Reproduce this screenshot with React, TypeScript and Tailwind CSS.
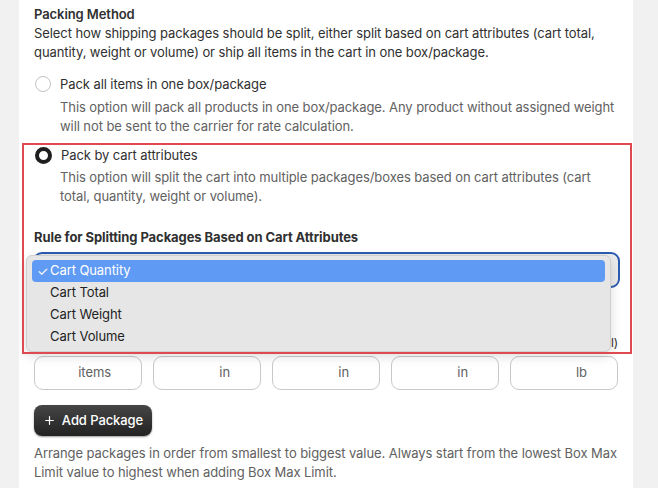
import { Plus } from 'lucide-react';

const units = ['items', 'in', 'in', 'in', 'lb'];
const options = ['Cart Total', 'Cart Weight', 'Cart Volume'];

export default function App() {
  return (
    <div
      className="min-h-[488px] w-[658px] bg-[#f1f1f1] text-[13px] text-[#303030]"
      style={{ fontFamily: 'Inter, "Noto Sans", sans-serif' }}
    >
      <div className="relative ml-[19px] h-[488px] w-[614px] overflow-hidden bg-white pl-[15px] pr-[15px] pt-[4px] tracking-[-0.08px]">
        {/* Packing method */}
        <h2 className="text-[13px] font-semibold leading-[20px] text-[#303030]">Packing Method</h2>
        <p className="whitespace-nowrap leading-[19px] text-[#303030]">
          Select how shipping packages should be split, either split based on cart attributes (cart total,
          <br />
          quantity, weight or volume) or ship all items in the cart in one box/package.
        </p>

        <div className="mt-[12px] flex h-[20px] items-center gap-[9px]">
          <span className="ml-[1px] h-[16px] w-[16px] rounded-full border border-[#c4c4c4] bg-white" />
          <span className="leading-[20px]">Pack all items in one box/package</span>
        </div>
        <p className="ml-[26px] mt-[4px] whitespace-nowrap leading-[19px] text-[#616161]">
          This option will pack all products in one box/package. Any product without assigned weight
          <br />
          will not be sent to the carrier for rate calculation.
        </p>

        <div className="mt-[9px] flex h-[20px] items-center gap-[9px]">
          <span className="ml-[1px] h-[17px] w-[17px] rounded-full border-[4px] border-[#1f1f1f] bg-white" />
          <span className="leading-[20px]">Pack by cart attributes</span>
        </div>
        <p className="ml-[26px] mt-[3px] whitespace-nowrap leading-[19px] text-[#616161]">
          This option will split the cart into multiple packages/boxes based on cart attributes (cart
          <br />
          total, quantity, weight or volume).
        </p>

        <h3 className="mt-[21px] font-bold leading-[20px]">Rule for Splitting Packages Based on Cart Attributes</h3>
        <div className="ml-[-1px] mt-[5px] h-[36px] w-[587px] rounded-[9px] border-2 border-[#2c5cb0] bg-[#ececec]" />

        {/* label mostly hidden under the open menu */}
        <div className="mt-[46px] flex h-[18px] w-[584px] justify-end text-[12px] leading-[18px] text-[#303030]">
          <span>Weight (optional)</span>
        </div>

        <div className="mt-[4px] grid w-[584px] grid-cols-5 gap-[11px]">
          {units.map((u, i) => (
            <div
              key={i}
              className="flex h-[34px] items-center justify-end rounded-[9px] border border-[#c9c9c9] pr-[30px] text-[#616161]"
            >
              {u}
            </div>
          ))}
        </div>

        <button className="mt-[15px] flex h-[31px] w-[118px] items-center justify-center gap-[6px] rounded-[8px] bg-gradient-to-b from-[#464646] to-[#222222] font-medium text-white shadow-[0_1px_2px_rgba(0,0,0,0.4)]">
          <Plus className="h-[13px] w-[13px]" strokeWidth={2.2} />
          Add Package
        </button>

        <p className="mt-[8px] whitespace-nowrap leading-[19px] text-[#616161]">
          Arrange packages in order from smallest to biggest value. Always start from the lowest Box Max
          <br />
          Limit value to highest when adding Box Max Limit.
        </p>

        {/* open select menu */}
        <div className="absolute left-[7px] top-[255px] h-[97px] w-[585px] rounded-[6px] border border-[#cfcfcf] bg-[#e6e6e6] px-[5px] pt-[4px] shadow-[0_4px_12px_rgba(0,0,0,0.15)]">
          <div className="flex h-[22px] items-center rounded-[4px] bg-[#5f9af4] pl-[5px] text-white">
            <span className="w-[13px] text-[13px] leading-none">✓</span>
            <span>Cart Quantity</span>
          </div>
          {options.map((o) => (
            <div key={o} className="flex h-[22px] items-center pl-[18px] text-[#222222]">
              {o}
            </div>
          ))}
        </div>

        {/* annotation box */}
        <div className="pointer-events-none absolute left-[3px] top-[143px] h-[211px] w-[610px] border-2 border-[#de4a4f]" />
      </div>
    </div>
  );
}
